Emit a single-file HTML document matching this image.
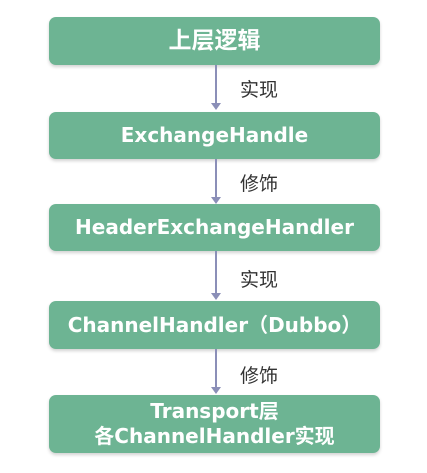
<!DOCTYPE html>
<html><head><meta charset="utf-8"><style>
body{margin:0;width:427px;height:473px;background:#fff;position:relative;font-family:"DejaVu Sans","Noto Sans CJK SC",sans-serif;}
.b{position:absolute;left:49px;width:331px;background:#6db493;border-radius:7px;color:#fff;font-weight:bold;font-size:20px;display:flex;align-items:center;justify-content:center;text-align:center;line-height:25px;box-shadow:0 2px 3px rgba(0,0,0,.18);}
.c{font-size:23px;}
.l{position:absolute;left:215px;width:2px;background:#8b8fb8;}
.a{position:absolute;left:211px;width:0;height:0;border-left:5px solid transparent;border-right:5px solid transparent;border-top:7px solid #8b8fb8;}
.t{position:absolute;left:240px;font-size:19px;color:#333;font-family:"Noto Sans CJK SC",sans-serif;}
</style></head><body>
<div class="b" style="top:17px;height:48px"><span class="c">上层逻辑</span></div>
<div class="b" style="top:112px;height:47px">ExchangeHandle</div>
<div class="b" style="top:204px;height:47px">HeaderExchangeHandler</div>
<div class="b" style="top:301px;height:48px">ChannelHandler（Dubbo）</div>
<div class="b" style="top:395px;height:58px">Transport层<br>各ChannelHandler实现</div>
<div class="l" style="top:65px;height:40px"></div><div class="a" style="top:103px"></div>
<div class="l" style="top:159px;height:39px"></div><div class="a" style="top:197px"></div>
<div class="l" style="top:251px;height:43px"></div><div class="a" style="top:293px"></div>
<div class="l" style="top:349px;height:40px"></div><div class="a" style="top:387px"></div>
<div class="t" style="top:75px">实现</div>
<div class="t" style="top:169px">修饰</div>
<div class="t" style="top:265px">实现</div>
<div class="t" style="top:361px">修饰</div>
</body></html>
